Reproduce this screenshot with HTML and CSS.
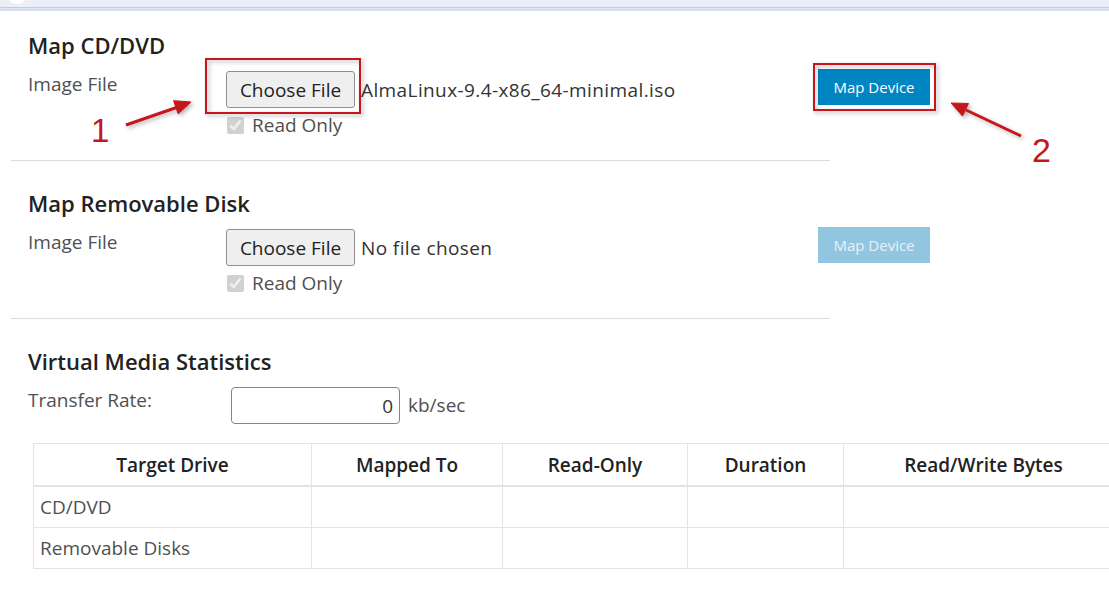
FILE: index.html
```html
<!DOCTYPE html>
<html lang="en">

<head>
    <meta charset="UTF-8">
    <title>Virtual Media</title>
    <link rel="stylesheet" href="styles.css">
</head>

<body>

    <div class="topbar"><span class="topbar-tab"></span></div>

    <main class="page">

        <section class="panel first">
            <h2>Map CD/DVD</h2>
            <div class="map-row">
                <span class="field-label">Image File</span>
                <div class="file-group">
                    <div class="file-line">
                        <button class="file-btn">Choose File</button>
                        <span class="file-name">AlmaLinux-9.4-x86_64-minimal.iso</span>
                    </div>
                    <label class="read-only"><input type="checkbox" checked disabled> Read Only</label>
                </div>
                <button class="map-btn">Map Device</button>
            </div>
        </section>

        <hr class="divider">

        <section class="panel">
            <h2>Map Removable Disk</h2>
            <div class="map-row">
                <span class="field-label">Image File</span>
                <div class="file-group">
                    <div class="file-line">
                        <button class="file-btn">Choose File</button>
                        <span class="file-name">No file chosen</span>
                    </div>
                    <label class="read-only"><input type="checkbox" checked disabled> Read Only</label>
                </div>
                <button class="map-btn" disabled>Map Device</button>
            </div>
        </section>

        <hr class="divider">

        <section class="panel">
            <h2>Virtual Media Statistics</h2>
            <div class="rate-row">
                <span class="field-label">Transfer Rate:</span>
                <input class="rate-input" type="text" value="0" readonly>
                <span class="rate-unit">kb/sec</span>
            </div>

            <table class="stats">
                <thead>
                    <tr>
                        <th class="col-target">Target Drive</th>
                        <th class="col-mapped">Mapped To</th>
                        <th class="col-ro">Read-Only</th>
                        <th class="col-duration">Duration</th>
                        <th class="col-bytes">Read/Write Bytes</th>
                    </tr>
                </thead>
                <tbody>
                    <tr>
                        <td>CD/DVD</td>
                        <td></td>
                        <td></td>
                        <td></td>
                        <td></td>
                    </tr>
                    <tr>
                        <td>Removable Disks</td>
                        <td></td>
                        <td></td>
                        <td></td>
                        <td></td>
                    </tr>
                </tbody>
            </table>
        </section>

    </main>

    <!-- screenshot annotations -->
    <svg class="marks" width="1109" height="600" viewBox="0 0 1109 600">
        <defs>
            <filter id="soft" x="-20%" y="-20%" width="140%" height="140%">
                <feDropShadow dx="2" dy="2" stdDeviation="2" flood-color="#000" flood-opacity="0.3" />
            </filter>
        </defs>
        <g filter="url(#soft)" fill="none" stroke="#c4161c" stroke-width="2">
            <rect x="206" y="59" width="154" height="54" />
            <rect x="814" y="64" width="121" height="46" />
        </g>
        <g filter="url(#soft)" fill="#c4161c" stroke="#c4161c">
            <line x1="126" y1="125" x2="178" y2="107" stroke-width="3" />
            <polygon points="191,102 178.2,113.9 173.6,100.7" stroke-width="1" />
            <line x1="1021" y1="136" x2="966" y2="110" stroke-width="3" />
            <polygon points="951,103 968.5,103.5 962.5,116.1" stroke-width="1" />
        </g>
    </svg>
    <span class="mark-num num-1">1</span>
    <span class="mark-num num-2">2</span>

</body>

</html>
```

FILE: styles.css
```css
html,
body {
    margin: 0;
    padding: 0;
    background: #fff;
    overflow: hidden;
    font-family: "Open Sans", Arial, sans-serif;
    color: #333;
}

.topbar {
    position: relative;
    height: 11px;
    background: linear-gradient(#eaeff8 0, #eaeff8 7px, #c7cbd1 7px, #c7cbd1 8px, #e3e8f0 8px, #e3e8f0 9px, #d6dff0 9px, #d6dff0 11px);
}

.topbar-tab {
    position: absolute;
    left: 8px;
    top: -4px;
    width: 18px;
    height: 8px;
    border-radius: 0 0 9px 9px;
    background: #fff;
}

.page {
    padding-left: 11px;
}

.panel {
    padding: 28px 0 23px 17px;
}

.panel.first {
    padding-top: 20px;
}

.panel h2 {
    margin: 0 0 12px;
    font-size: 22px;
    line-height: 28px;
    font-weight: 600;
    color: #222;
}

.divider {
    width: 819px;
    margin: 0;
    border: none;
    border-top: 1px solid #dcdcdc;
}

.field-label {
    padding-top: 1px;
    font-size: 19px;
    line-height: 24px;
    color: #505050;
}

.map-row {
    display: grid;
    grid-template-columns: 198px 592px 112px;
    align-items: start;
}

.file-line {
    display: flex;
    align-items: center;
    gap: 6px;
}

.file-btn {
    height: 37px;
    width: 129px;
    padding: 0;
    font-family: inherit;
    font-size: 19px;
    color: #222;
    background: #efefef;
    border: 1px solid #8f8f8f;
    border-radius: 3px;
}

.file-name {
    font-size: 19px;
    letter-spacing: 0.4px;
    color: #333;
}

.read-only {
    display: flex;
    align-items: center;
    gap: 8px;
    margin-top: 5px;
    font-size: 19px;
    line-height: 24px;
    color: #505050;
}

.read-only input {
    width: 17px;
    height: 17px;
    margin: 0 0 0 1px;
}

.map-btn {
    height: 36px;
    margin-top: -2px;
    padding: 0;
    font-family: inherit;
    font-size: 15px;
    color: #fff;
    background: #0085c3;
    border: none;
    border-radius: 0;
}

.map-btn:disabled {
    background: #92c6e0;
    color: #e6f1f7;
}

.rate-row {
    display: flex;
    align-items: flex-start;
}

.rate-row .field-label {
    width: 203px;
}

.rate-input {
    box-sizing: border-box;
    width: 169px;
    height: 37px;
    padding: 0 6px;
    font-family: inherit;
    font-size: 19px;
    color: #333;
    text-align: right;
    border: 1px solid #858585;
    border-radius: 4px;
}

.rate-unit {
    margin-left: 8px;
    font-size: 19px;
    line-height: 37px;
    color: #505050;
}

.stats {
    margin: 19px 0 0 5px;
    width: 1091px;
    border-collapse: collapse;
    table-layout: fixed;
    font-size: 19px;
}

.stats th,
.stats td {
    border: 1px solid #e4e4e4;
    padding: 0 6px;
}

.stats th {
    height: 41px;
    font-weight: 600;
    color: #222;
    border-bottom-width: 2px;
}

.stats td {
    height: 40px;
    color: #505050;
}

.col-target {
    width: 265px;
}

.col-mapped {
    width: 178px;
}

.col-ro {
    width: 172px;
}

.col-duration {
    width: 143px;
}

.marks {
    position: absolute;
    left: 0;
    top: 0;
    pointer-events: none;
}

.mark-num {
    position: absolute;
    font-family: "Liberation Sans", Arial, sans-serif;
    line-height: 1;
    color: #c4161c;
}

.num-1 {
    left: 91px;
    top: 114px;
    font-size: 33px;
}

.num-2 {
    left: 1032px;
    top: 133px;
    font-size: 34px;
}
```
